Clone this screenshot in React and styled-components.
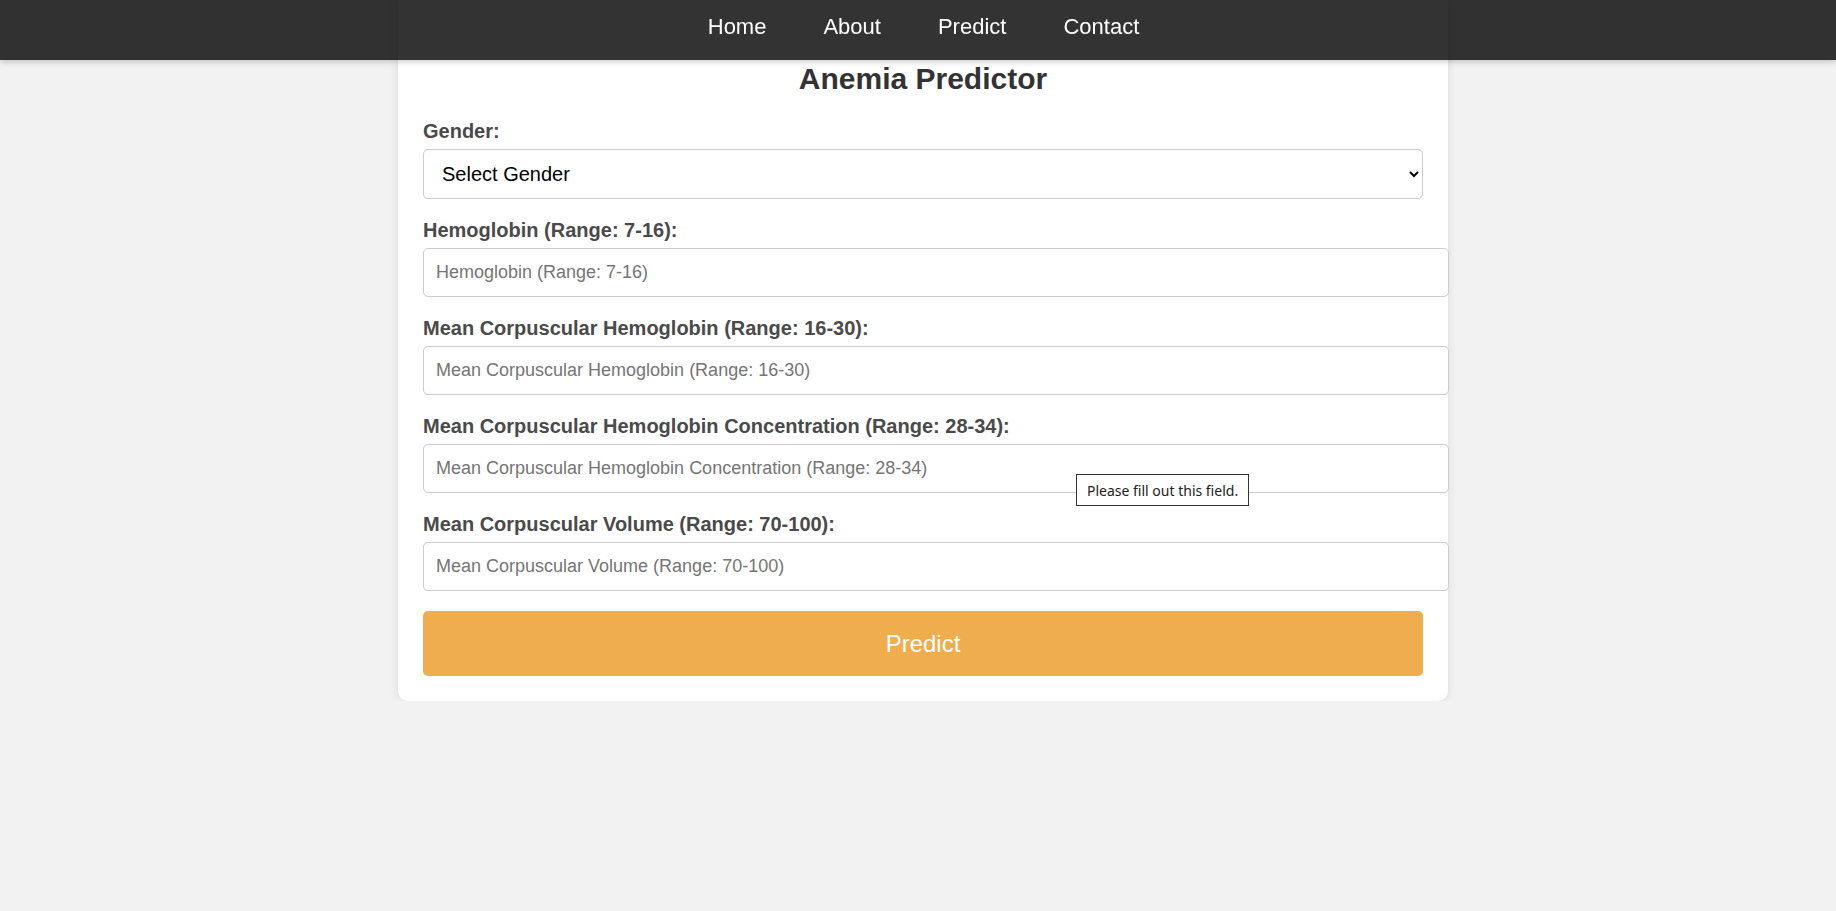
import React from 'react'
import styled, { createGlobalStyle } from 'styled-components'

const GlobalStyle = createGlobalStyle`
  body {
    margin: 0;
    background: #f2f2f2;
    font-family: "Liberation Sans", Arial, sans-serif;
  }
`

const Nav = styled.nav`
  position: fixed;
  top: 0;
  left: 0;
  right: 0;
  height: 60px;
  box-sizing: border-box;
  padding: 14px 0 0 11px;
  background: rgba(0, 0, 0, 0.8);
  box-shadow: 0 2px 6px rgba(0, 0, 0, 0.2);
  display: flex;
  justify-content: center;
  align-items: flex-start;
  gap: 57px;
  z-index: 10;
`

const NavLink = styled.a`
  color: #fff;
  text-decoration: none;
  font-size: 22px;
  line-height: 25px;
`

const Page = styled.main`
  display: flex;
  justify-content: center;
  padding-left: 10px;
`

const Card = styled.div`
  width: 1050px;
  box-sizing: border-box;
  padding: 25px;
  background: #fff;
  border-radius: 0 0 10px 10px;
  box-shadow: 0 0 10px rgba(0, 0, 0, 0.1);
`

const Title = styled.h2`
  margin: 37px 0 24px;
  text-align: center;
  font-size: 30px;
  line-height: 34px;
  color: #333;
`

const Field = styled.div`
  display: flex;
  flex-direction: column;
  align-items: flex-start;
  margin-bottom: 20px;
`

const Label = styled.label`
  font-size: 20px;
  line-height: 23px;
  font-weight: bold;
  color: #4a4a4a;
  margin-bottom: 6px;
`

const Select = styled.select`
  width: 100%;
  height: 50px;
  padding: 0 10px 0 14px;
  border: 1px solid #ccc;
  border-radius: 5px;
  background: #fff;
  color: #000;
  font-family: "Liberation Sans", Arial, sans-serif;
  font-size: 20px;
`

const InputWrap = styled.div`
  position: relative;
  width: 100%;
`

const Input = styled.input`
  display: block;
  width: 100%;
  padding: 13px 12px;
  border: 1px solid #ccc;
  border-radius: 5px;
  font-family: "Liberation Sans", Arial, sans-serif;
  font-size: 18px;
  line-height: 21px;
  height: 21px;
  &::placeholder {
    color: #757575;
  }
`

const Tooltip = styled.div`
  position: absolute;
  left: 653px;
  top: 30px;
  height: 32px;
  box-sizing: border-box;
  padding: 0 10px;
  display: flex;
  align-items: center;
  background: #fff;
  border: 1px solid #333;
  font-family: "Noto Sans", "Open Sans", sans-serif;
  font-size: 14px;
  color: #222;
  white-space: nowrap;
`

const Button = styled.button`
  width: 100%;
  height: 65px;
  margin-top: 0;
  border: none;
  border-radius: 5px;
  background: #f0ad4e;
  color: #fff;
  font-family: "Liberation Sans", Arial, sans-serif;
  font-size: 24px;
  cursor: pointer;
`

const fields = [
  { name: 'hemoglobin', label: 'Hemoglobin (Range: 7-16)' },
  { name: 'mch', label: 'Mean Corpuscular Hemoglobin (Range: 16-30)' },
  { name: 'mchc', label: 'Mean Corpuscular Hemoglobin Concentration (Range: 28-34)', tip: true },
  { name: 'mcv', label: 'Mean Corpuscular Volume (Range: 70-100)' },
]

const App = () => {
  return (
    <>
      <GlobalStyle />
      <Nav>
        <NavLink href="#">Home</NavLink>
        <NavLink href="#">About</NavLink>
        <NavLink href="#">Predict</NavLink>
        <NavLink href="#">Contact</NavLink>
      </Nav>
      <Page>
        <Card>
          <Title>Anemia Predictor</Title>
          <form onSubmit={e => e.preventDefault()}>
            <Field>
              <Label htmlFor="gender">Gender:</Label>
              <Select id="gender" defaultValue="">
                <option value="">Select Gender</option>
                <option value="0">Male</option>
                <option value="1">Female</option>
              </Select>
            </Field>
            {fields.map(f => (
              <Field key={f.name}>
                <Label htmlFor={f.name}>{f.label}:</Label>
                <InputWrap>
                  <Input id={f.name} type="number" placeholder={f.label} />
                  {f.tip && <Tooltip>Please fill out this field.</Tooltip>}
                </InputWrap>
              </Field>
            ))}
            <Button type="submit">Predict</Button>
          </form>
        </Card>
      </Page>
    </>
  )
}

export default App
